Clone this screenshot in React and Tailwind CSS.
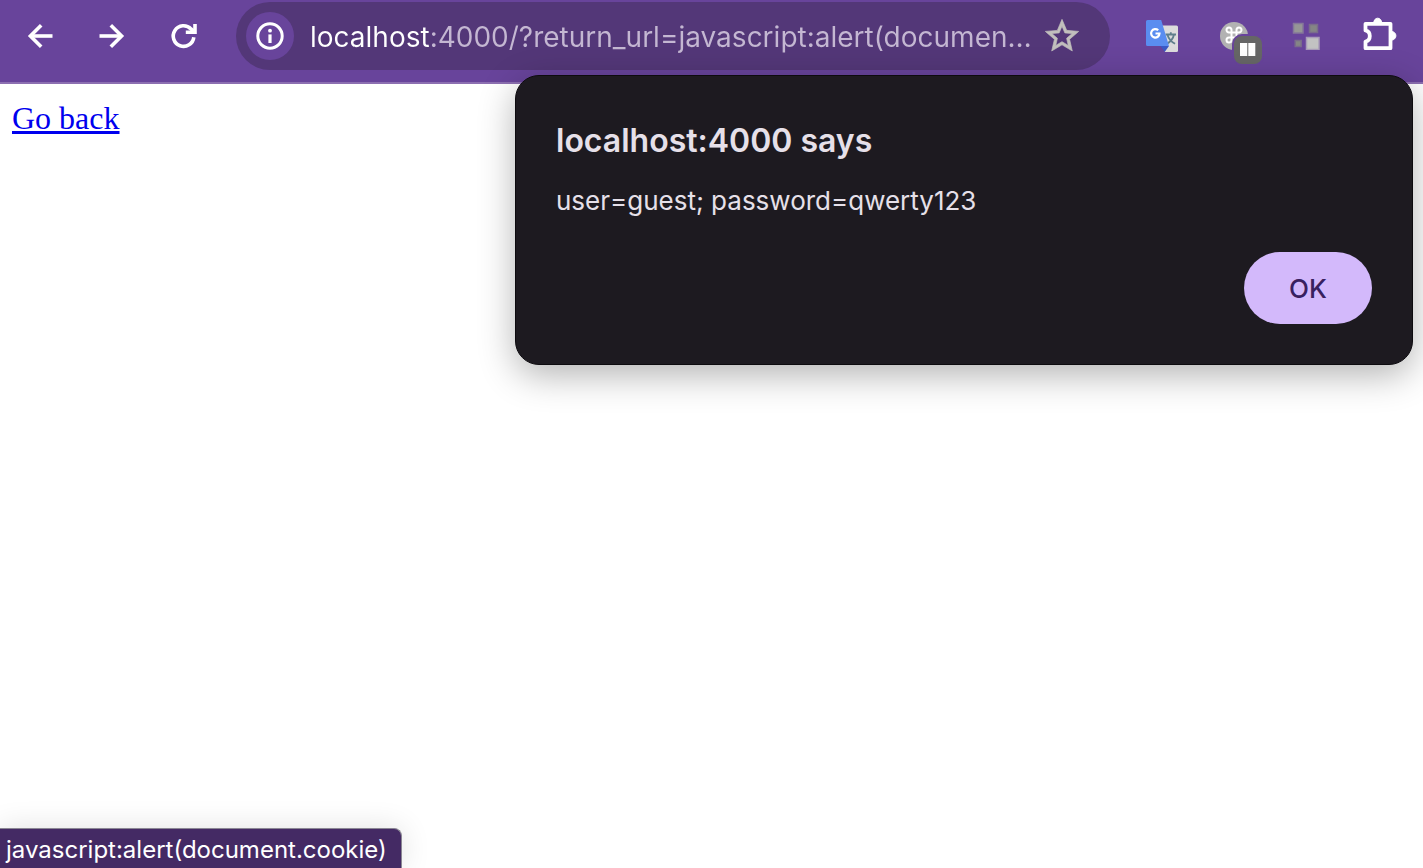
import React, { useState } from "react";

function NavButton({ label, children }) {
  return (
    <button type="button" aria-label={label} className="flex size-[72px] shrink-0 items-center justify-center text-white">
      {children}
    </button>
  );
}

function ArrowIcon({ className = "" }) {
  return (
    <svg viewBox="0 0 40 40" className={`size-10 ${className}`} fill="none" stroke="currentColor" strokeWidth="3.6">
      <path d="M32.5 20H10.5" />
      <path d="M21.2 9.2 10.4 20l10.8 10.8" />
    </svg>
  );
}

function ReloadIcon() {
  return (
    <svg viewBox="0 0 40 40" className="size-10" fill="none" stroke="currentColor" strokeWidth="3.6">
      <path d="M29.8 21.2A10.3 10.3 0 1 1 27 12.9L29.8 15.6" />
      <path d="M31 8V16.2H21.8" />
    </svg>
  );
}

function InfoIcon() {
  return (
    <svg viewBox="0 0 28 28" className="size-7" fill="none">
      <circle cx="14" cy="14" r="12.2" stroke="currentColor" strokeWidth="3" />
      <rect x="12.4" y="12.4" width="3.2" height="8.6" fill="currentColor" />
      <circle cx="14" cy="8.7" r="1.9" fill="currentColor" />
    </svg>
  );
}

function StarIcon() {
  return (
    <svg viewBox="0 0 24 24" className="size-10" fill="currentColor" stroke="currentColor" strokeWidth="0.4">
      <path d="m22 9.24-7.19-.62L12 2 9.19 8.63 2 9.24l5.46 4.73L5.82 21 12 17.27 18.18 21l-1.63-7.03L22 9.24zM12 15.4l-3.76 2.27 1-4.28-3.32-2.88 4.38-.38L12 6.1l1.71 4.04 4.38.38-3.32 2.88 1 4.28L12 15.4z" />
    </svg>
  );
}

function TranslateIcon() {
  return (
    <svg viewBox="0 0 32 32" className="size-8">
      <path d="M14 5.5h16.5a1.5 1.5 0 0 1 1.5 1.5v23.5a1.5 1.5 0 0 1-1.5 1.5H19z" fill="#dcdcdc" />
      <path d="M19.5 14.5h10.500M24.8 12.2v2.3M28 14.5c-.8 4-3.6 7.3-7.2 9.4M21.5 15c1.2 3.8 4.1 7 7.6 8.8" fill="none" stroke="#5f7f8c" strokeWidth="1.8" />
      <path d="M14.5 26H23l-4.2 5.8z" fill="#3a59c4" />
      <path d="M1.500 0h13.7L23 26H1.500A1.500 1.500 0 0 1 0 24.500v-23A1.500 1.500 0 0 1 1.500 0z" fill="#5a8df0" />
      <path d="M12.2 10.3A4.2 4.2 0 1 0 13.5 13.5H9.5" fill="none" stroke="#fff" strokeWidth="2.2" />
    </svg>
  );
}

function CommandIcon() {
  return (
    <svg viewBox="0 0 28 28" className="size-7">
      <circle cx="14" cy="14" r="14" fill="#b2b2b2" />
      <path
        d="M11.5 10.5h5v5h-5zM11.5 10.5H9a2.500 2.500 0 1 1 2.500-2.500zM16.5 10.5V8A2.500 2.500 0 1 1 19 10.500zM11.5 15.5V18A2.500 2.500 0 1 1 9 15.500zM16.5 15.5H19a2.500 2.500 0 1 1-2.500 2.500z"
        fill="none"
        stroke="#fff"
        strokeWidth="2"
      />
    </svg>
  );
}

function PauseIcon() {
  return (
    <svg viewBox="0 0 28 28" className="size-7">
      <path d="M6 7h7.3v13H6zM14.3 7h7v13h-7z" fill="#fff" />
    </svg>
  );
}

function SquaresIcon() {
  return (
    <svg viewBox="0 0 28 28" className="size-7" strokeWidth="1.5">
      <rect x="1.5" y="1.5" width="9.5" height="9.5" fill="#969696" stroke="#85779a" />
      <rect x="17.5" y="2.5" width="8" height="8" fill="#858585" stroke="#7a6c8c" />
      <rect x="3.2" y="18.5" width="6" height="6" fill="#858585" stroke="#7a6c8c" />
      <rect x="14.5" y="15.5" width="12.5" height="12" fill="#c2c2c2" stroke="#a99cb9" />
    </svg>
  );
}

function PuzzleIcon() {
  return (
    <svg viewBox="0 0 40 40" className="size-10">
      <path
        d="M7.5 7.8h25v24.4h-25v-6.6c2.6-.6 4.3-2.9 4.3-5.6s-1.7-5-4.3-5.6z"
        fill="none"
        stroke="currentColor"
        strokeWidth="3.8"
        strokeLinejoin="round"
      />
      <path d="M15.7 7a4 4.8 0 0 1 8 0z" fill="currentColor" stroke="currentColor" strokeWidth="1" />
      <path d="M33.5 15.5a4.4 4.3 0 0 1 0 8.6z" fill="currentColor" stroke="currentColor" strokeWidth="1" />
    </svg>
  );
}

function Toolbar() {
  const [url, setUrl] = useState("localhost:4000/?return_url=javascript:alert(document.cookie)");
  return (
    <header className="flex items-start border-b-2 border-[#8c6fb1] bg-[#68449b] pr-[9px] pb-[10px] pl-1">
      <nav className="flex" aria-label="History">
        <NavButton label="Back">
          <ArrowIcon />
        </NavButton>
        <NavButton label="Forward">
          <ArrowIcon className="-scale-x-100" />
        </NavButton>
        <NavButton label="Reload">
          <ReloadIcon />
        </NavButton>
      </nav>
      <div className="mx-4 mt-[2px] flex h-[68px] min-w-0 flex-1 items-center rounded-full bg-[#533778] pr-6 pl-[10px]">
        <button
          type="button"
          aria-label="View site information"
          className="flex size-12 shrink-0 items-center justify-center rounded-full bg-[#68449b] text-white"
        >
          <InfoIcon />
        </button>
        <input
          type="text"
          aria-label="Address"
          value={url}
          onChange={(e) => setUrl(e.target.value)}
          className="mr-1 ml-4 h-10 min-w-0 flex-1 bg-[linear-gradient(90deg,#ffffff_121px,#c4b7d2_121px)] bg-clip-text pt-[2px] text-[28px] text-ellipsis text-transparent outline-none"
        />
        <button type="button" aria-label="Bookmark this tab" className="flex size-12 shrink-0 items-center justify-center text-[#c1bfbd]">
          <StarIcon />
        </button>
      </div>
      <div className="flex">
        <NavButton label="Google Translate">
          <TranslateIcon />
        </NavButton>
        <NavButton label="Shortcuts">
          <span className="relative">
            <CommandIcon />
            <span className="absolute top-[14px] left-[14px] rounded-lg bg-[#666666] ring-2 ring-[#68449b]">
              <PauseIcon />
            </span>
          </span>
        </NavButton>
        <NavButton label="Tiles">
          <SquaresIcon />
        </NavButton>
        <NavButton label="Extensions">
          <PuzzleIcon />
        </NavButton>
      </div>
    </header>
  );
}

function AlertDialog({ onClose }) {
  return (
    <div
      role="alertdialog"
      aria-labelledby="alert-title"
      aria-describedby="alert-message"
      className="absolute top-[75px] right-[10px] flex w-[898px] max-w-[96vw] flex-col rounded-3xl border border-[#0d0b0f] bg-[#1d1a20] px-10 pt-[45px] pb-10 text-[#e6e0e9] shadow-[0_10px_36px_rgba(0,0,0,0.3)]"
    >
      <h1 id="alert-title" className="text-[32px] leading-10 font-semibold">
        localhost:4000 says
      </h1>
      <p id="alert-message" className="mt-5 text-[26px] leading-10">
        user=guest; password=qwerty123
      </p>
      <button
        type="button"
        onClick={onClose}
        className="mt-[31px] h-[72px] w-32 self-end rounded-full bg-[#d3b9fb] text-[26px] font-medium text-[#38205f]"
      >
        OK
      </button>
    </div>
  );
}

export default function App() {
  const [open, setOpen] = useState(true);
  return (
    <div className="relative flex min-h-screen flex-col overflow-hidden bg-white font-['Inter',sans-serif]">
      <Toolbar />
      <main className="flex-1 px-3 pt-4 font-['Liberation_Serif',serif] text-[32px] leading-9">
        <a href="#back" className="text-[#0000ee] underline">
          Go back
        </a>
      </main>
      {open && <AlertDialog onClose={() => setOpen(false)} />}
      <div
        role="status"
        className="absolute bottom-0 left-0 h-10 w-[402px] rounded-tr-lg border-t border-r border-[#8b8794] bg-[#442a64] pt-px pl-[6px] text-2xl leading-10 whitespace-nowrap text-white shadow-[0_0_30px_rgba(0,0,0,0.12)]"
      >
        javascript:alert(document.cookie)
      </div>
    </div>
  );
}
